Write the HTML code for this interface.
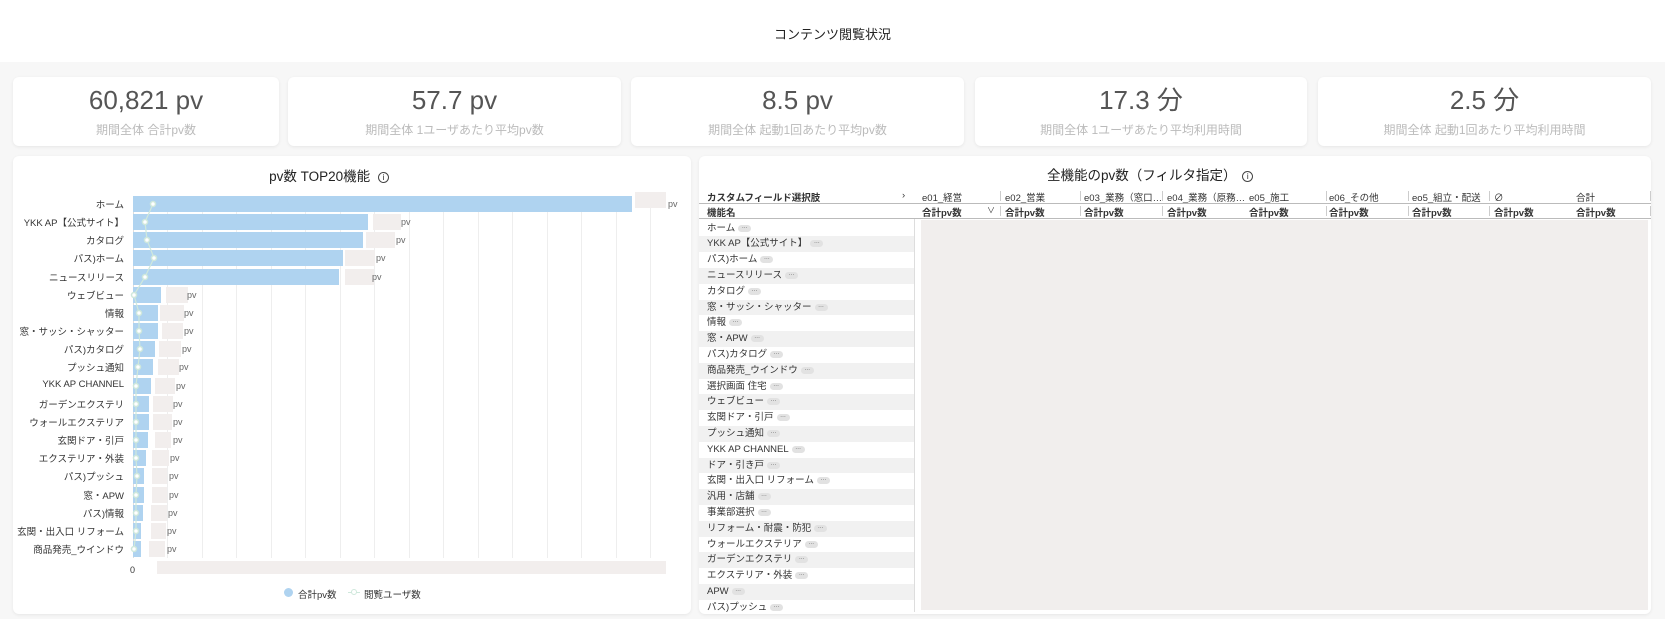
<!DOCTYPE html>
<html><head><meta charset="utf-8"><style>
*{margin:0;padding:0;box-sizing:border-box}
body{width:1665px;height:619px;background:#fff;font-family:"Liberation Sans","Noto Sans CJK JP",sans-serif;position:relative;overflow:hidden;color:#333}
.a{position:absolute}
.bg{left:0;top:62px;width:1665px;height:557px;background:#f7f7f7}
.card{position:absolute;background:#fff;border-radius:6px;box-shadow:0 1px 3px rgba(0,0,0,.07)}
.kv{position:absolute;left:0;right:0;top:8px;height:30px;line-height:30px;text-align:center;font-size:26px;color:#555}
.kl{position:absolute;left:0;right:0;top:44px;text-align:center;font-size:12px;color:#bbb}
.lbl{position:absolute;right:1541px;font-size:9.5px;color:#333;white-space:nowrap;text-align:right}
.bar{position:absolute;left:133px;height:16px;background:#afd3f0}
.gb{position:absolute;height:16px;background:#f2eeed}
.pv{position:absolute;font-size:9px;color:#666}
.grid{position:absolute;top:196px;width:1px;height:362px;background:#eee}
.th{position:absolute;font-size:9.5px;color:#333;white-space:nowrap}
.row{position:absolute;left:699px;width:215px;height:15.8px;font-size:9.5px;line-height:15.8px;padding-left:8px;white-space:nowrap;color:#333}
.g{background:#f1f1f1}
.m{display:inline-block;width:13px;height:7px;border-radius:4px;background:#e2e2e2;vertical-align:middle;margin-left:3px;font-size:6px;line-height:5px;text-align:center;color:#666}
.sep{position:absolute;width:1px;height:10px;background:#ccc}
</style></head><body>
<div class="a" style="left:0;top:24px;width:1665px;text-align:center;font-size:13px;color:#222">コンテンツ閲覧状況</div>
<div class="a bg"></div>

<div class="card" style="left:13px;top:77px;width:266px;height:69px"><div class="kv">60,821 pv</div><div class="kl">期間全体 合計pv数</div></div>
<div class="card" style="left:288px;top:77px;width:333px;height:69px"><div class="kv">57.7 pv</div><div class="kl">期間全体 1ユーザあたり平均pv数</div></div>
<div class="card" style="left:631px;top:77px;width:333px;height:69px"><div class="kv">8.5 pv</div><div class="kl">期間全体 起動1回あたり平均pv数</div></div>
<div class="card" style="left:975px;top:77px;width:332px;height:69px"><div class="kv">17.3 分</div><div class="kl">期間全体 1ユーザあたり平均利用時間</div></div>
<div class="card" style="left:1318px;top:77px;width:333px;height:69px"><div class="kv">2.5 分</div><div class="kl">期間全体 起動1回あたり平均利用時間</div></div>

<div class="card" style="left:13px;top:156px;width:678px;height:458px"></div>
<div class="a" style="left:13px;top:165px;width:632px;text-align:center;font-size:13.5px;color:#222">pv数 TOP20機能 <span style="display:inline-block;width:11px;height:11px;border:1px solid #444;border-radius:6px;font-size:8px;line-height:9px;vertical-align:1px;margin-left:4px">i</span></div>

<div class="grid" style="left:133px;background:#ddd"></div>
<div class="grid" style="left:167px"></div><div class="grid" style="left:202px"></div><div class="grid" style="left:236px"></div><div class="grid" style="left:271px"></div><div class="grid" style="left:305px"></div><div class="grid" style="left:340px"></div><div class="grid" style="left:374px"></div><div class="grid" style="left:409px"></div><div class="grid" style="left:443px"></div><div class="grid" style="left:478px"></div><div class="grid" style="left:512px"></div><div class="grid" style="left:547px"></div><div class="grid" style="left:581px"></div><div class="grid" style="left:616px"></div><div class="grid" style="left:650px"></div>

<div class="lbl" style="top:197px">ホーム</div><div class="bar" style="top:196px;width:499px"></div><div class="gb" style="top:192px;left:635px;width:31px"></div><div class="pv" style="top:199px;left:668px">pv</div>
<div class="lbl" style="top:215px">YKK AP【公式サイト】</div><div class="bar" style="top:214px;width:235px"></div><div class="gb" style="top:214px;left:373px;width:28px"></div><div class="pv" style="top:217px;left:401px">pv</div>
<div class="lbl" style="top:233px">カタログ</div><div class="bar" style="top:232px;width:230px"></div><div class="gb" style="top:232px;left:366px;width:29px"></div><div class="pv" style="top:235px;left:396px">pv</div>
<div class="lbl" style="top:251px">パス)ホーム</div><div class="bar" style="top:250px;width:210px"></div><div class="gb" style="top:250px;left:345px;width:30px"></div><div class="pv" style="top:253px;left:376px">pv</div>
<div class="lbl" style="top:270px">ニュースリリース</div><div class="bar" style="top:269px;width:206px"></div><div class="gb" style="top:269px;left:345px;width:29px"></div><div class="pv" style="top:272px;left:372px">pv</div>
<div class="lbl" style="top:288px">ウェブビュー</div><div class="bar" style="top:287px;width:28px"></div><div class="gb" style="top:287px;left:166px;width:22px"></div><div class="pv" style="top:290px;left:187px">pv</div>
<div class="lbl" style="top:306px">情報</div><div class="bar" style="top:305px;width:25px"></div><div class="gb" style="top:305px;left:160px;width:24px"></div><div class="pv" style="top:308px;left:184px">pv</div>
<div class="lbl" style="top:324px">窓・サッシ・シャッター</div><div class="bar" style="top:323px;width:25px"></div><div class="gb" style="top:323px;left:162px;width:21px"></div><div class="pv" style="top:326px;left:184px">pv</div>
<div class="lbl" style="top:342px">パス)カタログ</div><div class="bar" style="top:341px;width:22px"></div><div class="gb" style="top:341px;left:159px;width:22px"></div><div class="pv" style="top:344px;left:182px">pv</div>
<div class="lbl" style="top:360px">プッシュ通知</div><div class="bar" style="top:359px;width:20px"></div><div class="gb" style="top:359px;left:158px;width:21px"></div><div class="pv" style="top:362px;left:179px">pv</div>
<div class="lbl" style="top:379px">YKK AP CHANNEL</div><div class="bar" style="top:378px;width:18px"></div><div class="gb" style="top:378px;left:155px;width:20px"></div><div class="pv" style="top:381px;left:176px">pv</div>
<div class="lbl" style="top:397px">ガーデンエクステリ</div><div class="bar" style="top:396px;width:16px"></div><div class="gb" style="top:396px;left:153px;width:20px"></div><div class="pv" style="top:399px;left:173px">pv</div>
<div class="lbl" style="top:415px">ウォールエクステリア</div><div class="bar" style="top:414px;width:16px"></div><div class="gb" style="top:414px;left:153px;width:19px"></div><div class="pv" style="top:417px;left:173px">pv</div>
<div class="lbl" style="top:433px">玄関ドア・引戸</div><div class="bar" style="top:432px;width:15px"></div><div class="gb" style="top:432px;left:155px;width:16px"></div><div class="pv" style="top:435px;left:173px">pv</div>
<div class="lbl" style="top:451px">エクステリア・外装</div><div class="bar" style="top:450px;width:13px"></div><div class="gb" style="top:450px;left:152px;width:17px"></div><div class="pv" style="top:453px;left:170px">pv</div>
<div class="lbl" style="top:469px">パス)プッシュ</div><div class="bar" style="top:468px;width:11px"></div><div class="gb" style="top:468px;left:152px;width:15px"></div><div class="pv" style="top:471px;left:169px">pv</div>
<div class="lbl" style="top:488px">窓・APW</div><div class="bar" style="top:487px;width:11px"></div><div class="gb" style="top:487px;left:152px;width:15px"></div><div class="pv" style="top:490px;left:169px">pv</div>
<div class="lbl" style="top:506px">パス)情報</div><div class="bar" style="top:505px;width:10px"></div><div class="gb" style="top:505px;left:151px;width:16px"></div><div class="pv" style="top:508px;left:168px">pv</div>
<div class="lbl" style="top:524px">玄関・出入口 リフォーム</div><div class="bar" style="top:523px;width:8px"></div><div class="gb" style="top:523px;left:151px;width:15px"></div><div class="pv" style="top:526px;left:167px">pv</div>
<div class="lbl" style="top:542px">商品発売_ウインドウ</div><div class="bar" style="top:541px;width:8px"></div><div class="gb" style="top:541px;left:149px;width:16px"></div><div class="pv" style="top:544px;left:167px">pv</div>

<svg class="a" style="left:0;top:0" width="700" height="619">
<polyline fill="none" stroke="#cfe8dc" stroke-width="1.2" points="153,204 145,222 147,240 154,258 145,277 134,295 139,313 139,331 140,349 138,367 136,386 136,404 136,422 136,440 136,458 137,476 136,495 136,513 136,531 134,549"/>
<g fill="#fff" stroke="#cfe8dc" stroke-width="1.5">
<circle cx="153" cy="204" r="2.5"/><circle cx="145" cy="222" r="2.5"/><circle cx="147" cy="240" r="2.5"/><circle cx="154" cy="258" r="2.5"/><circle cx="145" cy="277" r="2.5"/><circle cx="134" cy="295" r="2.5"/><circle cx="139" cy="313" r="2.5"/><circle cx="139" cy="331" r="2.5"/><circle cx="140" cy="349" r="2.5"/><circle cx="138" cy="367" r="2.5"/><circle cx="136" cy="386" r="2.5"/><circle cx="136" cy="404" r="2.5"/><circle cx="136" cy="422" r="2.5"/><circle cx="136" cy="440" r="2.5"/><circle cx="136" cy="458" r="2.5"/><circle cx="137" cy="476" r="2.5"/><circle cx="136" cy="495" r="2.5"/><circle cx="136" cy="513" r="2.5"/><circle cx="136" cy="531" r="2.5"/><circle cx="134" cy="549" r="2.5"/>
</g>
</svg>
<div class="a" style="left:130px;top:565px;font-size:9px;color:#333">0</div>
<div class="a" style="left:157px;top:561px;width:509px;height:13px;background:#f2eeed"></div>
<div class="a" style="left:284px;top:588px;width:9px;height:9px;border-radius:5px;background:#afd3f0"></div>
<div class="a" style="left:298px;top:587px;font-size:9.5px;color:#333">合計pv数</div>
<div class="a" style="left:348px;top:592px;width:12px;height:1px;background:#cfe8dc"></div>
<div class="a" style="left:351px;top:589px;width:6px;height:6px;border-radius:3px;border:1.3px solid #cfe8dc;background:#fff"></div>
<div class="a" style="left:364px;top:587px;font-size:9.5px;color:#333">閲覧ユーザ数</div>

<div class="card" style="left:699px;top:156px;width:952px;height:458px"></div>
<div class="a" style="left:1047px;top:164px;font-size:13.5px;color:#222">全機能のpv数（フィルタ指定） <span style="display:inline-block;width:11px;height:11px;border:1px solid #444;border-radius:6px;font-size:8px;line-height:9px;text-align:center;vertical-align:1px;margin-left:2px">i</span></div>
<div class="th" style="left:707px;top:190px;font-weight:bold">カスタムフィールド選択肢</div>
<div class="th" style="left:902px;top:190px">›</div>
<div class="th" style="left:922px;top:190px">e01_経営</div>
<div class="th" style="left:1005px;top:190px">e02_営業</div>
<div class="th" style="left:1084px;top:190px">e03_業務（窓口…</div>
<div class="th" style="left:1167px;top:190px">e04_業務（原務…</div>
<div class="th" style="left:1249px;top:190px">e05_施工</div>
<div class="th" style="left:1329px;top:190px">e06_その他</div>
<div class="th" style="left:1412px;top:190px">eo5_組立・配送</div>
<div class="th" style="left:1494px;top:190px">∅</div>
<div class="th" style="left:1576px;top:190px">合計</div>
<div class="a" style="left:699px;top:203px;width:952px;height:1px;background:#bbb"></div>
<div class="th" style="left:707px;top:205px;font-weight:bold">機能名</div>
<div class="th" style="left:922px;top:205px;font-weight:bold">合計pv数</div><div class="th" style="left:987px;top:205px;font-size:8px">∨</div>
<div class="th" style="left:1005px;top:205px;font-weight:bold">合計pv数</div>
<div class="th" style="left:1084px;top:205px;font-weight:bold">合計pv数</div>
<div class="th" style="left:1167px;top:205px;font-weight:bold">合計pv数</div>
<div class="th" style="left:1249px;top:205px;font-weight:bold">合計pv数</div>
<div class="th" style="left:1329px;top:205px;font-weight:bold">合計pv数</div>
<div class="th" style="left:1412px;top:205px;font-weight:bold">合計pv数</div>
<div class="th" style="left:1494px;top:205px;font-weight:bold">合計pv数</div>
<div class="th" style="left:1576px;top:205px;font-weight:bold">合計pv数</div>
<div class="a" style="left:699px;top:218px;width:952px;height:1px;background:#bbb"></div>
<div class="sep" style="left:1000px;top:191px"></div><div class="sep" style="left:1080px;top:191px"></div><div class="sep" style="left:1162px;top:191px"></div><div class="sep" style="left:1326px;top:191px"></div><div class="sep" style="left:1408px;top:191px"></div><div class="sep" style="left:1489px;top:191px"></div><div class="sep" style="left:1650px;top:191px"></div>
<div class="sep" style="left:1000px;top:206px"></div><div class="sep" style="left:1080px;top:206px"></div><div class="sep" style="left:1162px;top:206px"></div><div class="sep" style="left:1326px;top:206px"></div><div class="sep" style="left:1408px;top:206px"></div><div class="sep" style="left:1489px;top:206px"></div><div class="sep" style="left:1650px;top:206px"></div>

<div class="a" style="left:914px;top:219px;width:1px;height:393px;background:#ddd"></div>
<div class="a" style="left:921px;top:220px;width:727px;height:390px;background:#f1eeed"></div>

<div class="row" style="top:220.6px">ホーム<span class="m">…</span></div>
<div class="row g" style="top:236.4px">YKK AP【公式サイト】<span class="m">…</span></div>
<div class="row" style="top:252.2px">パス)ホーム<span class="m">…</span></div>
<div class="row g" style="top:268px">ニュースリリース<span class="m">…</span></div>
<div class="row" style="top:283.8px">カタログ<span class="m">…</span></div>
<div class="row g" style="top:299.6px">窓・サッシ・シャッター<span class="m">…</span></div>
<div class="row" style="top:315.4px">情報<span class="m">…</span></div>
<div class="row g" style="top:331.2px">窓・APW<span class="m">…</span></div>
<div class="row" style="top:347px">パス)カタログ<span class="m">…</span></div>
<div class="row g" style="top:362.8px">商品発売_ウインドウ<span class="m">…</span></div>
<div class="row" style="top:378.6px">選択画面 住宅<span class="m">…</span></div>
<div class="row g" style="top:394.4px">ウェブビュー<span class="m">…</span></div>
<div class="row" style="top:410.2px">玄関ドア・引戸<span class="m">…</span></div>
<div class="row g" style="top:426px">プッシュ通知<span class="m">…</span></div>
<div class="row" style="top:441.8px">YKK AP CHANNEL<span class="m">…</span></div>
<div class="row g" style="top:457.6px">ドア・引き戸<span class="m">…</span></div>
<div class="row" style="top:473.4px">玄関・出入口 リフォーム<span class="m">…</span></div>
<div class="row g" style="top:489.2px">汎用・店舗<span class="m">…</span></div>
<div class="row" style="top:505px">事業部選択<span class="m">…</span></div>
<div class="row g" style="top:520.8px">リフォーム・耐震・防犯<span class="m">…</span></div>
<div class="row" style="top:536.6px">ウォールエクステリア<span class="m">…</span></div>
<div class="row g" style="top:552.4px">ガーデンエクステリ<span class="m">…</span></div>
<div class="row" style="top:568.2px">エクステリア・外装<span class="m">…</span></div>
<div class="row g" style="top:584px">APW<span class="m">…</span></div>
<div class="row" style="top:599.8px;height:12px;overflow:hidden">パス)プッシュ<span class="m">…</span></div>
</body></html>
